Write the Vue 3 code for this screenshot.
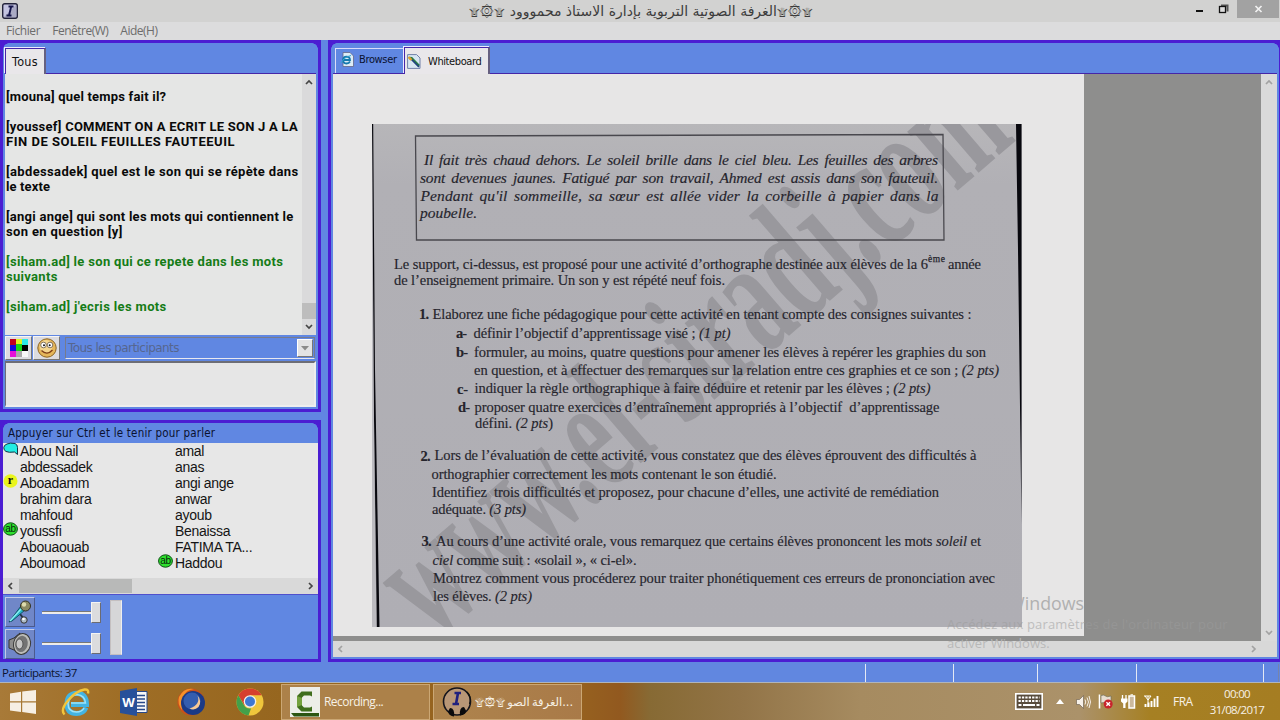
<script setup>
const chat = [
  { t: '[mouna] quel temps fait il?', s: 0.2 },
  { t: '' },
  { t: '[youssef] COMMENT ON A ECRIT LE SON J A LA', s: 0.25 },
  { t: 'FIN DE SOLEIL FEUILLES FAUTEEUIL', s: 0.52 },
  { t: '' },
  { t: '[abdessadek] quel est le son qui se répète dans', s: 0.36 },
  { t: 'le texte', s: 0.12 },
  { t: '' },
  { t: '[angi ange] qui sont les mots qui contiennent le', s: 0.25 },
  { t: 'son en question [y]', s: 0.36 },
  { t: '' },
  { t: '[siham.ad] le son qui ce repete dans les mots', s: 0.32, g: true },
  { t: 'suivants', s: 0.3, g: true },
  { t: '' },
  { t: "[siham.ad] j'ecris les mots", s: 0.35, g: true }
]

const columns = [
  [['Abou Nail', 'bubble'], ['abdessadek'], ['Aboadamm', 'r'], ['brahim dara'], ['mahfoud'], ['youssfi', 'ab'], ['Abouaouab'], ['Aboumoad']],
  [['amal'], ['anas'], ['angi ange'], ['anwar'], ['ayoub'], ['Benaissa'], ['FATIMA TA...'], ['Haddou', 'ab']]
]

// x, baseline, width, parts of the line
const doc = [
  { x: 424, y: 165, w: 514, i: 1, p: 'Il fait très chaud dehors. Le soleil brille dans le ciel bleu. Les feuilles des arbres' },
  { x: 420, y: 182.5, w: 518, i: 1, p: 'sont devenues jaunes. Fatigué par son travail, Ahmed est assis dans son fauteuil.' },
  { x: 420.5, y: 200.5, w: 518, i: 1, p: "Pendant qu'il sommeille, sa sœur est allée vider la corbeille à papier dans la" },
  { x: 420, y: 218, w: 57, i: 1, p: 'poubelle.' },
  { x: 394, y: 269, w: 534, p: 'Le support, ci-dessus, est proposé pour une activité d’orthographe destinée aux élèves de la 6' },
  { x: 948, y: 268.5, w: 33, p: 'année' },
  { x: 394, y: 285, w: 331, p: 'de l’enseignement primaire. Un son y est répété neuf fois.' },
  { x: 419, y: 319, w: 10, b: 1, p: '1.' },
  { x: 432.5, y: 319, w: 539, p: 'Elaborez une fiche pédagogique pour cette activité en tenant compte des consignes suivantes :' },
  { x: 456, y: 338, w: 11, b: 1, p: 'a-' },
  { x: 473.5, y: 338, w: 257, p: 'définir l’objectif d’apprentissage visé ; ', e: '(1 pt)' },
  { x: 456, y: 356.5, w: 12, b: 1, p: 'b-' },
  { x: 474, y: 356.5, w: 512, p: 'formuler, au moins, quatre questions pour amener les élèves à repérer les graphies du son' },
  { x: 474, y: 375, w: 525, p: 'en question, et à effectuer des remarques sur la relation entre ces graphies et ce son ; ', e: '(2 pts)' },
  { x: 457, y: 393.5, w: 11, b: 1, p: 'c-' },
  { x: 474.5, y: 393, w: 456, p: 'indiquer la règle orthographique à faire déduire et retenir par les élèves ; ', e: '(2 pts)' },
  { x: 458, y: 412, w: 12, b: 1, p: 'd-' },
  { x: 474.5, y: 412, w: 465, p: 'proposer quatre exercices d’entraînement appropriés à l’objectif  d’apprentissage' },
  { x: 475, y: 428, w: 78, p: 'défini. ', e: '(2 pts', z: ')' },
  { x: 420.5, y: 460.5, w: 10, b: 1, p: '2.' },
  { x: 434.5, y: 460, w: 542, p: 'Lors de l’évaluation de cette activité, vous constatez que des élèves éprouvent des difficultés à' },
  { x: 431.5, y: 478.5, w: 345, p: 'orthographier correctement les mots contenant le son étudié.' },
  { x: 432, y: 496.5, w: 507, p: 'Identifiez  trois difficultés et proposez, pour chacune d’elles, une activité de remédiation' },
  { x: 432, y: 513.5, w: 94, p: 'adéquate. ', e: '(3 pts)' },
  { x: 421.5, y: 546, w: 10, b: 1, p: '3.' },
  { x: 436, y: 546, w: 545, p: 'Au cours d’une activité orale, vous remarquez que certains élèves prononcent les mots ', e: 'soleil', z: ' et' },
  { x: 432.5, y: 564.5, w: 204, a: 'ciel', p: ' comme suit : «solail », « ci-el».' },
  { x: 433, y: 582.5, w: 562, p: 'Montrez comment vous procéderez pour traiter phonétiquement ces erreurs de prononciation avec' },
  { x: 433, y: 601, w: 99, p: 'les élèves. ', e: '(2 pts)' }
]
</script>

<template>
  <div class="screen">
    <header class="title">
      <svg class="app-ico" width="16" height="16" viewBox="0 0 16 16">
        <rect x=".7" y=".7" width="14.6" height="14.6" rx="2" fill="#c4c4e2" stroke="#24243c" stroke-width="1.4" />
        <path d="M2 14L14 2V14z" fill="#9090a8" opacity=".5" />
        <path d="M6.5 3.5h5M4.5 12.5h5M9.2 3.5L7 12.5" stroke="#15154a" stroke-width="1.9" />
      </svg>
      <span class="caption" dir="rtl">۩۞۩الغرفة الصوتية التربوية بإدارة الاستاذ محمووود ۩۞۩</span>
      <svg class="winbtns" width="90" height="20" viewBox="0 0 90 20">
        <rect x="47" width="42" height="18" fill="#a2a2a2" />
        <path d="M6 11h7" stroke="#111" stroke-width="2" />
        <path d="M31 5.500h6.500v6" fill="none" stroke="#555" stroke-width="2" />
        <rect x="29.500" y="6.500" width="6" height="6" fill="#ddd" stroke="#111" stroke-width="1.300" />
        <path d="M65.500 6l6 6M71.500 6l-6 6" stroke="#f2f2f2" stroke-width="1.700" />
      </svg>
    </header>
    <nav class="menu"><span>Fichier</span><span>Fenêtre(W)</span><span>Aide(H)</span></nav>

    <main class="body">
      <aside class="left">
        <section class="panel chatpanel">
          <div class="tabs"><div class="tab active tous">Tous</div></div>
          <div class="chat">
            <div class="lines">
              <p v-for="(l, i) in chat" :key="i" :class="{ green: l.g }" :style="{ letterSpacing: (l.s || 0) + 'px' }">{{ l.t }}</p>
            </div>
            <div class="vbar">
              <svg width="14" height="16" viewBox="0 0 14 16"><path d="M4 10l3-3 3 3" class="chev" /></svg>
              <i class="thumb"></i>
              <svg width="14" height="16" viewBox="0 0 14 16"><path d="M4 6l3 3 3-3" class="chev" /></svg>
            </div>
          </div>
          <div class="tools">
            <div class="tbtn">
              <svg width="18" height="18" viewBox="0 0 18 18">
                <path fill="#c00020" d="M0 0h6v6H0z" /><path fill="#000" d="M12 6h6v6h-6z" /><path fill="#2be8e8" d="M12 0h6v6h-6z" />
                <path fill="#1408e0" d="M0 6h6v6H0z" /><path fill="#18d818" d="M6 5h6v7H6z" /><path fill="#e4ef20" d="M6 0h6v5H6z" />
                <path fill="#e612d8" d="M0 12h6v6H0z" /><path fill="#aaa" d="M6 12h6v6H6z" /><path fill="#f8f8f8" d="M12 12h6v6h-6z" />
              </svg>
            </div>
            <div class="tbtn">
              <svg width="20" height="20" viewBox="0 0 20 20">
                <circle cx="10" cy="10" r="9.200" fill="#e5b65a" stroke="#8b6424" />
                <circle cx="9" cy="8.500" r="6.500" fill="#f4d58d" />
                <circle cx="6.500" cy="7" r="2.800" fill="#fff" stroke="#654" stroke-width=".8" /><circle cx="13" cy="7" r="2.800" fill="#fff" stroke="#654" stroke-width=".8" />
                <circle cx="7" cy="7.300" r="1" fill="#111" /><circle cx="12.700" cy="7.300" r="1" fill="#111" />
                <path d="M4.500 12.500q5.500 5.500 11-.5" fill="none" stroke="#7c3e18" stroke-width="1.300" />
              </svg>
            </div>
            <div class="combo"><span>Tous les participants</span><b><svg width="8" height="5" viewBox="0 0 8 5"><path d="M0 0h8L4 4.500z" fill="#8a8a8a" /></svg></b></div>
          </div>
          <div class="input"></div>
        </section>

        <section class="panel people">
          <div class="hint">Appuyer sur Ctrl et le tenir pour parler</div>
          <div class="list">
            <ul v-for="(c, k) in columns" :key="k">
              <li v-for="n in c" :key="n[0]">
                <svg v-if="n[1] === 'bubble'" class="mark" width="16" height="14" viewBox="0 0 16 14"><path d="M4 2Q7 .5 12 1.500q2.500 1 2.500 4v7l-3-2.500q-6 .8-8.500-.5Q.5 8 .8 5.500 1 3 4 2z" fill="#22ede4" stroke="#134" /></svg>
                <svg v-else-if="n[1] === 'r'" class="mark" width="16" height="14" viewBox="0 0 16 14"><ellipse cx="7.500" cy="7" rx="7" ry="6.800" fill="#eaf51c" /><text x="7.300" y="10" class="r">r</text></svg>
                <svg v-else-if="n[1] === 'ab'" class="mark" width="16" height="14" viewBox="0 0 16 14"><ellipse cx="7.500" cy="7" rx="6.900" ry="6.200" fill="#2ee02e" stroke="#0b4a12" /><text x="7.500" y="10" class="ab">ab</text></svg>
                {{ n[0] }}
              </li>
            </ul>
          </div>
          <div class="hbar">
            <svg width="16" height="14" viewBox="0 0 16 14"><path d="M9 4L6 7l3 3" class="chev" /></svg>
            <i class="hthumb"></i>
            <svg width="16" height="14" viewBox="0 0 16 14"><path d="M7 4l3 3-3 3" class="chev" /></svg>
          </div>
          <div class="audio">
            <div class="abtns">
              <div class="abtn">
                <svg width="26" height="26" viewBox="0 0 26 26">
                  <path d="M13 15l4 5" stroke="#234" stroke-width="2" />
                  <path d="M2 23L14 7l4 4L5 22z" fill="#27b4c4" stroke="#114e66" />
                  <path d="M3 22L15 9" stroke="#8ef1f4" stroke-width="1.300" />
                  <circle cx="18.500" cy="7" r="5" fill="#8c8a62" stroke="#333222" /><circle cx="17" cy="5.500" r="2.200" fill="#dedcae" />
                  <circle cx="17" cy="21" r="3.200" fill="#aebcc6" stroke="#333" /><circle cx="16.500" cy="20" r="1.300" fill="#fff" />
                </svg>
              </div>
              <div class="abtn">
                <svg width="26" height="26" viewBox="0 0 26 26">
                  <path d="M2 9l5-2 6-5v21l-6-4-5-2z" fill="#8c8c8c" stroke="#333" />
                  <ellipse cx="15" cy="13" rx="8.500" ry="10.500" fill="#bdbdb8" stroke="#3b3b3b" transform="rotate(12 15 13)" />
                  <ellipse cx="14.500" cy="13" rx="6.200" ry="8.200" fill="#737373" transform="rotate(12 15 13)" />
                  <ellipse cx="12.500" cy="13" rx="3.500" ry="5" fill="#c6c6c6" stroke="#555" />
                </svg>
              </div>
            </div>
            <div class="sliders">
              <div class="slider"><i></i><b></b></div>
              <div class="slider"><i></i><b></b></div>
            </div>
            <div class="meter"></div>
          </div>
        </section>
      </aside>

      <section class="panel board">
        <div class="tabs">
          <div class="tab browser">
            <svg width="14" height="15" viewBox="0 0 14 15">
              <path d="M3 .5h7l3.500 3.500v10.500H3z" fill="#dcecf6" stroke="#668" stroke-width=".8" />
              <path d="M10 9.500q-1 2-3.500 2Q3 11.300 3 8q.2-3.200 3.500-3.300Q10 4.800 10 8H4" fill="none" stroke="#1679ae" stroke-width="1.800" />
              <path d="M1 11Q4 5 11 3.500" fill="none" stroke="#35a6d2" />
            </svg>Browser
          </div>
          <div class="tab active wb">
            <svg width="14" height="15" viewBox="0 0 14 15">
              <path d="M.6.600h9L13 4v10.400H.6z" fill="#d7e6f2" stroke="#7080a8" />
              <path d="M2.500 4l2 .3L12 12" fill="none" stroke="#287c46" stroke-width="2.600" />
              <path d="M4 5l8 8" stroke="#203c86" stroke-width="1.200" /><path d="M1.500 3L4.500 6" stroke="#e1a02a" stroke-width="2.400" />
            </svg>Whiteboard
          </div>
        </div>
        <div class="viewport">
          <div class="canvas">
            <div class="page">
              <svg class="scan" width="650" height="503" viewBox="372 124 650 503">
                <defs>
                  <linearGradient id="pg" x1="0" y1="0" x2="0" y2="1"><stop offset="0" stop-color="#b7b6b9" /><stop offset=".12" stop-color="#b1b0b5" /><stop offset="1" stop-color="#afaeb4" /></linearGradient>
                </defs>
                <rect x="372" y="124" width="650" height="503" fill="url(#pg)" />
                <text class="wm" transform="translate(433 642) rotate(-40.700) scale(.574 1)">www.el-siradj.com</text>
                <path d="M415.500 136L943 134.500 944 240H416.500z" fill="none" stroke="#49484e" stroke-width="1.300" />
                <path d="M372 124h1.200L375 370l4.500 257h-3L374 420z" fill="#08080e" />
                <path d="M372 124l1.500 260 3.500 243H372z" fill="#c4c3c8" opacity=".6" />
                <path d="M1016 124h5.500v400L1018 250z" fill="#08080e" />
                <text
                  v-for="(l, i) in doc" :key="i" :x="l.x" :y="l.y" :textLength="l.w"
                  :class="['dt', { it: l.i, bd: l.b }]"
                ><tspan v-if="l.a" class="it2">{{ l.a }}</tspan>{{ l.p }}<tspan v-if="l.e" class="it2">{{ l.e }}</tspan>{{ l.z }}</text>
                <text x="928" y="262" textLength="17" class="sup">ème</text>
              </svg>
            </div>
            <div class="vbar2">
              <svg width="16" height="16" viewBox="0 0 16 16"><path d="M5 10l3-3 3 3" class="chev pale" /></svg>
              <svg width="16" height="16" viewBox="0 0 16 16"><path d="M5 6l3 3 3-3" class="chev pale" /></svg>
            </div>
          </div>
          <div class="hbar2">
            <svg width="16" height="16" viewBox="0 0 16 16"><path d="M9 5L6 8l3 3" class="chev pale" /></svg>
            <svg width="16" height="16" viewBox="0 0 16 16"><path d="M7 5l3 3-3 3" class="chev pale" /></svg>
          </div>
        </div>
      </section>
    </main>

    <footer class="status">
      <span class="count">Participants: 37</span>
      <i class="c1"></i><i class="c2"></i><i class="c3"></i><i class="c4"></i><i class="c5"></i>
    </footer>

    <div class="taskbar">
      <div class="launch">
        <svg width="26" height="24" viewBox="0 0 26 24"><path fill="#f6efe4" d="M0 3.500l11-1.700v9.500H0zM12.200 1.600L26 0v11.300H12.200zM0 12.500h11V22L0 20.500zM12.200 12.500H26V24l-13.800-2z" /></svg>
        <svg width="30" height="30" viewBox="0 0 30 30">
          <path d="M25 20.500q-2.500 6-9.500 6Q6 26.500 6 16.500 6.500 6.500 16 6.300q9.500.5 9.500 11.200H10" fill="none" stroke="#43b4e2" stroke-width="5" />
          <path d="M23 21q-2 4-7.500 4Q7 25 7 16.500 8 8 16 7.500q8 1 8.500 8.500H10" fill="none" stroke="#9fe4f8" stroke-width="1.500" />
          <path d="M3.500 27.500Q-1 23 7 13.500 15 4 23.500 2.500q4.500-.5 3.500 4" fill="none" stroke="#f2c53a" stroke-width="2.400" />
        </svg>
        <svg width="28" height="28" viewBox="0 0 28 28">
          <path d="M14 3.500h13v21H14z" fill="#f7f7f7" stroke="#27488a" /><path d="M17 7.500h8M17 11h8M17 14.500h8M17 18h8M17 21.500h8" stroke="#27488a" stroke-width="1.500" />
          <path d="M0 3L17 0v28L0 25z" fill="#27509a" /><text x="8.500" y="18.500" class="wd">W</text>
        </svg>
        <svg width="30" height="30" viewBox="0 0 30 30">
          <circle cx="14" cy="15" r="13.500" fill="#c9501a" /><path d="M2 10Q7 0 17 2q-9 1-10 8-3 5-2 13Q0 17 2 10z" fill="#f5912a" />
          <circle cx="16" cy="16" r="12" fill="#1b3a86" /><circle cx="15" cy="14" r="8.500" fill="#3f6cc0" opacity=".7" />
          <path d="M20.500 8.500q3.500 9-8 13 5 2.500 9-1.500 4-5.500-1-11.500z" fill="#f8c894" />
        </svg>
        <svg width="28" height="28" viewBox="0 0 28 28">
          <circle cx="14" cy="14" r="13.500" fill="#efc63c" />
          <path d="M14 14L2.300 7.200A13.500 13.500 0 0 1 25.700 7.200H14z" fill="#d6402e" />
          <path d="M2.300 7.200L8.500 17.500 14 14 14 7.500z" fill="#d6402e" /><path d="M2.300 7.200L8.200 17.500Q10 21 15 20.500L12.500 27.500A13.500 13.500 0 0 1 2.300 7.200z" fill="#43a04a" />
          <circle cx="14" cy="13.500" r="6.300" fill="#f4f0e6" /><circle cx="14" cy="13.500" r="5" fill="#3f78d2" />
        </svg>
      </div>
      <div class="task rec">
        <svg width="30" height="30" viewBox="0 0 30 30"><rect width="30" height="30" fill="#eceee8" /><path d="M1 26h28v3.500H4z" fill="#2b5512" /><path d="M22 4.500v5l-2-1H14l-2 2v8l2 2h6l2-1v5H11.500L7 20V9l4.500-4.500z" fill="#3f6e1c" /><path d="M7 9l5 2v7l-5 2z" fill="#74a23e" /></svg>
        <span>Recording...</span>
      </div>
      <div class="task room">
        <svg width="32" height="30" viewBox="0 0 32 30">
          <circle cx="15" cy="14.500" r="13.500" fill="#b89676" stroke="#14141c" stroke-width="1.600" />
          <path d="M8 21q5 0 4 8.500-5-.5-6-5zM22 20q-5 0-4 8.500 6-.5 6-5z" fill="#0a0a0c" /><path d="M25 5q5 5 2.500 12" fill="none" stroke="#111" stroke-width="1.300" />
          <path d="M12.500 6h6.500M10.500 17h6.500M16 6l-2 11" stroke="#20207e" stroke-width="2.600" />
        </svg>
        <span dir="ltr" class="ar">۩۞۩ الغرفة الصو...</span>
      </div>
      <div class="tray">
        <svg class="kb" width="28" height="17" viewBox="0 0 28 17"><rect x=".8" y=".8" width="26.400" height="15.400" fill="#594c3c" stroke="#fff" stroke-width="1.600" /><path d="M3.500 4.500h21M3.500 8h21" stroke="#fff" stroke-width="2.200" stroke-dasharray="2.300 1.100" /><path d="M3.500 12h3M8 12h12M21.500 12h3" stroke="#fff" stroke-width="2.200" /></svg>
        <svg class="up" width="8" height="5" viewBox="0 0 8 5"><path d="M0 5l4-5 4 5z" fill="#fff" /></svg>
        <svg class="vol" width="15" height="14" viewBox="0 0 15 14"><path d="M.5 4.500h3l4-4v13l-4-4h-3z" fill="#f6f0e8" stroke="#645848" stroke-width=".6" /><path d="M9 4.500q1.500 2.500 0 5M11 2.500q3 4.500 0 9M13 1q3 6 0 12" fill="none" stroke="#f6f0e8" /></svg>
        <svg class="flag" width="15" height="15" viewBox="0 0 15 15"><path d="M1.500.5v14" stroke="#fff" stroke-width="1.600" /><path d="M3 1.500q3-1 4.500.5T13 2v7q-3 1-5 0t-5 0z" fill="#e9ded1" stroke="#665" stroke-width=".6" /><circle cx="10.200" cy="10" r="4.500" fill="#c8242c" /><path d="M8.400 8.200l3.600 3.600M12 8.200l-3.600 3.600" stroke="#fff" stroke-width="1.400" /></svg>
        <svg class="bat" width="15" height="15" viewBox="0 0 15 15"><path d="M1.500 1v4M5 1v4" stroke="#fff" stroke-width="1.300" /><path d="M0 4.500h6.500v3L4.500 9.500V14H2.200V9.500L0 7.500z" fill="#fff" /><rect x="8" y="2" width="5.500" height="12" fill="#cbb99e" stroke="#fff" stroke-width="1.500" /><path d="M9.500.8h2.500" stroke="#fff" /></svg>
        <svg class="net" width="15" height="13" viewBox="0 0 15 13"><path d="M0 1h7M1 1l3 4 3-4M4 1v11" fill="none" stroke="#fff" /><path d="M1.500 12V9M4.500 12V7.500M7.500 12V6M10.500 12V3.500M13.500 12V1" stroke="#fff" stroke-width="1.900" /></svg>
        <span class="lang">FRA</span>
        <div class="clock"><span>00:00</span><span>31/08/2017</span></div>
      </div>
    </div>

    <div class="activate">
      <div class="a1"><span>Activer Windows</span></div>
      <div class="a2">Accédez aux paramètres de l'ordinateur pour</div>
      <div class="a3">activer Windows.</div>
    </div>
  </div>
</template>

<style>
html, body { margin: 0; background: #6087e3; overflow: hidden; }
</style>

<style scoped>
* { box-sizing: border-box; }
.screen { position: relative; width: 1280px; height: 720px; display: flex; flex-direction: column; overflow: hidden; background: #6186e2; font-family: "Open Sans", "Noto Sans", sans-serif; color: #111; }
svg { flex: none; display: block; }
p, ul { margin: 0; padding: 0; list-style: none; }
.title { height: 22px; flex: none; background: #d2d2d1; display: flex; align-items: flex-start; justify-content: space-between; }
.app-ico { margin: 3px 75px 0 2px; }
.caption { width: 343px; font: 14px/22px "DejaVu Sans", sans-serif; color: #3c3c3c; white-space: nowrap; text-align: center; }
.menu { height: 18px; flex: none; background: #dcdcdd; display: flex; gap: 12px; padding-left: 6px; font-size: 12px; line-height: 18px; color: #6c6c6c; letter-spacing: -.5px; }
.menu span:nth-child(1) { letter-spacing: -.4px; }
.body { height: 622px; flex: none; display: flex; justify-content: space-between; background: #6186e2; }
.left { width: 321px; display: flex; flex-direction: column; gap: 8px; }
.panel {
  border: 3px solid #4b1dd2; display: flex; flex-direction: column;
  background:
    radial-gradient(circle at 6px 6px, transparent 5.500px, #4b1dd2 6px) 0 0 / 6px 6px no-repeat,
    radial-gradient(circle at 0 6px, transparent 5.500px, #4b1dd2 6px) 100% 0 / 6px 6px no-repeat,
    #6087e2;
}
.chatpanel { height: 372px; padding: 2px; }
.people { height: 242px; }
.board { width: 952px; height: 622px; padding: 2px; border-width: 3px 1px 3px 3px; }
.tabs { height: 29px; flex: none; display: flex; align-items: flex-end; border-bottom: 1px solid #4526a8; font: 11.500px "DejaVu Sans Condensed", sans-serif; }
.tab { display: flex; align-items: center; color: #111; white-space: nowrap; }
.tab.active { background: #e9e7ea; border: 1px solid #4526a8; border-right: 2px solid #666080; border-bottom: 0; box-shadow: -1px -1px 0 #eeeaff; margin-bottom: -1px; position: relative; }
.tous { width: 41px; height: 26px; justify-content: center; font-size: 12.500px; letter-spacing: .3px; }
.chat { width: 311px; height: 261px; flex: none; background: #e5e6e5; display: flex; justify-content: space-between; }
.lines { width: 296px; flex: none; padding: 15px 0 0 1px; font: bold 13px/15px Roboto, sans-serif; color: #0a0a0a; }
.lines p { height: 15px; white-space: pre; }
.lines .green { color: #157c17; }
.vbar { width: 14px; background: #dadadb; display: flex; flex-direction: column; justify-content: space-between; }
.vbar .thumb { height: 16px; margin-top: auto; background: #bdbdbd; }
.chev { fill: none; stroke: #454545; stroke-width: 1.700; }
.chev.pale { stroke: #a2a2a2; }
.tools { height: 25px; margin-top: 1px; flex: none; display: flex; gap: 1px; }
.tbtn { width: 27px; height: 24px; background: #dcdce0; border: 1px solid #f5f5f5; border-right-color: #777; border-bottom-color: #777; display: flex; align-items: center; justify-content: center; }
.combo { flex: 1; height: 22px; margin: 1px 1px 0 4px; border: 1px solid #777b8d; border-bottom: 1px solid #e8e8f0; display: flex; justify-content: space-between; padding: 1px 1px 1px 2px; color: #56668e; font: 12px/18px "DejaVu Sans", sans-serif; letter-spacing: -.55px; white-space: nowrap; }
.combo b { width: 16px; height: 18px; background: #e2e2e4; border: 1px solid #fff; border-right-color: #777; border-bottom-color: #777; display: flex; align-items: center; justify-content: center; }
.input { flex: 1; background: #e6e6e6; border: 2px solid #eee; border-top-color: #6d6d75; border-left: 1px solid #6d6d75; }
.hint { height: 20px; flex: none; padding-left: 5px; font: 11.500px/21px "DejaVu Sans Condensed", sans-serif; letter-spacing: .2px; color: #0b1230; white-space: nowrap; }
.list { height: 135px; flex: none; background: #e7e7e7; display: flex; }
.list ul { width: 155px; padding-left: 17px; font: 14px/16px "Liberation Sans", sans-serif; color: #151515; letter-spacing: -.3px; }
.list li { position: relative; height: 16px; white-space: nowrap; }
.mark { position: absolute; left: -17px; top: -1px; }
.r { font: bold 12px "Liberation Serif", serif; text-anchor: middle; fill: #111; }
.ab { font: 10px "Liberation Sans", sans-serif; text-anchor: middle; fill: #06280a; }
.hbar { height: 16px; flex: none; background: #d9d9d9; display: flex; align-items: center; justify-content: space-between; }
.hthumb { width: 113px; height: 14px; background: #b8b9b8; margin-right: auto; }
.audio { flex: 1; display: flex; border-top: 1px solid #4f50cc; padding: 2px; }
.abtns { display: flex; flex-direction: column; gap: 2px; }
.abtn { width: 30px; height: 30px; background: #7087c8; border: 1px solid #c3cbe8; border-right-color: #4c5a8c; border-bottom-color: #4c5a8c; display: flex; align-items: center; justify-content: center; }
.sliders { margin-left: 7px; padding-top: 5px; display: flex; flex-direction: column; gap: 10px; }
.slider { width: 59px; height: 21px; display: flex; align-items: center; }
.slider i { width: 49px; height: 3px; border-top: 1px solid #777; border-bottom: 2px solid #eeecea; }
.slider b { width: 10px; height: 21px; background: #dcdcde; border: 1px solid #f4f4f4; border-right-color: #6b6b72; border-bottom-color: #6b6b72; }
.meter { width: 12px; height: 55px; margin: 3px 0 0 9px; background: #d6d6d8; border: 1px solid #c4bfc0; border-right-color: #eee; }
.browser { width: 68px; height: 25px; margin-left: 2px; border: 1px solid #dcdcf8; border-bottom: 0; border-right: 0; padding: 0 0 3px 4px; gap: 5px; font-size: 11px; letter-spacing: -.35px; color: #0b1230; }
.wb { width: 86px; height: 27px; margin-left: 1px; padding: 0 0 0 2px; gap: 7px; font-size: 11px; letter-spacing: -.4px; }
.viewport { flex: 1; display: flex; flex-direction: column; }
.canvas { height: 567px; flex: none; display: flex; justify-content: space-between; background: #8e8e8d; }
.page { width: 751px; height: 562px; background: #e7e6e6; }
.scan { margin: 50px 0 0 39px; }
.wm { font: bold 169px "Liberation Serif", serif; fill: #99989d; }
.dt { font: 14.500px "Liberation Serif", serif; fill: #25242c; white-space: pre; stroke: #25242c; stroke-width: .15px; }
.dt.it { font-style: italic; font-size: 15.500px; word-spacing: 2.500px; }
.dt.bd { font-weight: bold; }
.it2 { font-style: italic; }
.sup { font: 9.500px "Liberation Serif", serif; fill: #25242c; stroke: #25242c; stroke-width: .25px; }
.vbar2 { width: 16px; background: #dadada; display: flex; flex-direction: column; justify-content: space-between; }
.hbar2 { height: 16px; background: #d8d8d8; display: flex; justify-content: space-between; padding-right: 16px; }
.status { height: 21px; flex: none; display: flex; background: #6187e0; border-bottom: 1px solid #b0b5bc; }
.count { width: 865px; padding-left: 2px; font-size: 11.500px; line-height: 22px; letter-spacing: -.48px; color: #0d1430; }
.status i { height: 18px; margin-top: 2px; border-left: 1px solid #e4e8f4; box-shadow: 1px 0 0 #7684ac; }
.c1 { width: 88px; } .c2 { width: 84px; } .c3 { width: 99px; } .c4 { width: 127px; } .c5 { width: 15px; }
.taskbar { height: 37px; flex: none; display: flex; color: #f7f1e6; background: linear-gradient(90deg, #a87a38 0, #9f6e26 120px, #96661f 282px, #96611f 580px, #92591f 620px, #876a34 650px, #927447 740px, #a68b60 860px, #ab926a 1080px, #a68023 1150px, #a57d22 1280px); }
.launch { display: flex; align-items: center; width: 280px; padding-left: 10px; }
.launch svg:nth-child(2) { margin-left: 25px; }
.launch svg:nth-child(3) { margin-left: 29px; }
.launch svg:nth-child(4) { margin-left: 29px; }
.launch svg:nth-child(5) { margin-left: 29px; }
.wd { font: bold 13px "Open Sans", sans-serif; fill: #fff; text-anchor: middle; }
.task { height: 36px; margin-top: 1px; background: #ac8149; border: 1px solid #cba774; display: flex; align-items: center; padding-bottom: 1px; font-size: 12px; letter-spacing: -.55px; white-space: nowrap; }
.rec { width: 149px; margin-left: 1px; padding-left: 8px; gap: 4px; }
.room { width: 149px; margin-left: 3px; padding-left: 8px; gap: 1px; background: linear-gradient(90deg, #ae844d, #a97a48); }
.ar { font: 11.500px "DejaVu Sans", sans-serif; letter-spacing: 0; word-spacing: -1.500px; }
.tray { flex: 1; display: flex; align-items: center; padding-left: 433px; font-size: 12px; white-space: nowrap; }
.up { margin-left: 13px; } .vol { margin-left: 12px; } .flag { margin-left: 7px; } .bat { margin-left: 8px; } .net { margin-left: 8px; }
.lang { width: 20px; margin-left: 14px; letter-spacing: -.5px; }
.clock { width: 60px; margin-left: 14px; display: flex; flex-direction: column; align-items: center; line-height: 16px; font-size: 11.500px; letter-spacing: -.65px; }
.activate { position: absolute; left: 947px; top: 592px; width: 300px; height: 62px; font-family: "Open Sans", sans-serif; white-space: nowrap; }
.a1 { height: 22px; font-size: 17.800px; line-height: 22px; color: #b0b0b0; clip-path: inset(0 162px 0 75px); }
.a2 { height: 20px; font-size: 13px; line-height: 20px; letter-spacing: .16px; color: #9c9c9c; opacity: .55; }
.a3 { height: 18px; font-size: 13px; line-height: 18px; color: #b8b8b8; }
</style>
